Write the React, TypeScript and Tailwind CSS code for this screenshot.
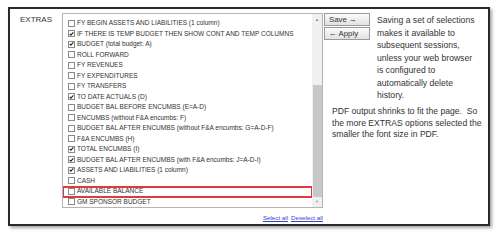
import React from "react";

const items: [string, boolean][] = [
  ["FY BEGIN ASSETS AND LIABILITIES (1 column)", false],
  ["IF THERE IS TEMP BUDGET THEN SHOW CONT AND TEMP COLUMNS", true],
  ["BUDGET (total budget: A)", true],
  ["ROLL FORWARD", false],
  ["FY REVENUES", false],
  ["FY EXPENDITURES", false],
  ["FY TRANSFERS", false],
  ["TO DATE ACTUALS (D)", true],
  ["BUDGET BAL BEFORE ENCUMBS (E=A-D)", false],
  ["ENCUMBS (without F&A encumbs: F)", false],
  ["BUDGET BAL AFTER ENCUMBS (without F&A encumbs: G=A-D-F)", false],
  ["F&A ENCUMBS (H)", false],
  ["TOTAL ENCUMBS (I)", true],
  ["BUDGET BAL AFTER ENCUMBS (with F&A encumbs: J=A-D-I)", true],
  ["ASSETS AND LIABILITIES (1 column)", true],
  ["CASH", false],
  ["AVAILABLE BALANCE", false],
  ["GM SPONSOR BUDGET", false],
];

function Box({ checked }: { checked: boolean }) {
  return (
    <span className="w-[7px] h-[7px] border border-[#8a8a8a] bg-white flex items-center justify-center shrink-0">
      {checked && (
        <svg width="6" height="6" viewBox="0 0 6 6">
          <path d="M0.8 2.8 L2.3 4.4 L5.2 1" stroke="#222" strokeWidth="1.3" fill="none" />
        </svg>
      )}
    </span>
  );
}

export default function App() {
  return (
    <div className="w-[500px] h-[240px] bg-white pt-[7px] pl-[8px]" style={{ fontFamily: '"Liberation Sans", Arial, sans-serif' }}>
      <div className="w-[482px] h-[219px] border-2 border-[#2a2a2a] shadow-[2px_2px_3px_rgba(0,0,0,0.35)] flex text-[#333]">
        <div className="w-[52px] pl-[10px] pt-[6px] text-[8px] leading-[10px]">EXTRAS</div>
        <div className="flex flex-col w-[261px] pt-[4px]">
          <div className="h-[195px] border border-[#b5b5b5] flex bg-white">
            <div className="flex-1 overflow-hidden pt-[4px] pl-[5px] relative">
              {items.map(([label, checked], i) => (
                <div key={i} className={`h-[10.5px] flex items-center gap-[2px] text-[6.5px] whitespace-nowrap text-[#333] ${label === "AVAILABLE BALANCE" ? "relative" : ""}`}>
                  <Box checked={checked} />
                  <span>{label}</span>
                  {label === "AVAILABLE BALANCE" && (
                    <span className="absolute left-[-6px] right-[-1px] top-[-0.5px] bottom-[-1px] border-2 border-[#e0393e]" />
                  )}
                </div>
              ))}
            </div>
            <div className="w-[10px] bg-[#f0f0f0] flex flex-col items-center">
              <div className="h-[11px] flex items-center justify-center text-[4px] text-[#777]">▲</div>
              <div className="h-[60px]" />
              <div className="w-[9px] h-[112px] bg-[#c8c8c8]" />
              <div className="flex-1 flex items-center justify-center text-[4px] text-[#999]">▼</div>
            </div>
          </div>
          <div className="flex justify-end gap-[3px] pt-[5px] pr-[0px] text-[6.2px] text-[#3344cc] underline">
            <span>Select all</span>
            <span>Deselect all</span>
          </div>
        </div>
        <div className="flex flex-col pt-[4px] pl-[1px]">
          <div className="flex">
            <div className="flex flex-col w-[46px]">
              <button className="h-[13px] border border-[#9a9a9a] bg-gradient-to-b from-[#fbfbfb] to-[#e2e2e2] text-[7.8px] text-left pl-[4px] leading-[11px] text-[#333]">Save →</button>
              <button className="h-[13px] border border-[#9a9a9a] bg-gradient-to-b from-[#fbfbfb] to-[#e2e2e2] text-[7.8px] text-left pl-[4px] leading-[11px] text-[#333] mt-[1px]">← Apply</button>
            </div>
            <div className="pl-[7px] pt-[1px] w-[107px] text-[8.6px] leading-[12.5px]">
              Saving a set of selections makes it available to subsequent sessions, unless your web browser is configured to automatically delete history.
            </div>
          </div>
          <div className="pl-[8px] pt-[4.5px] w-[162px] text-[8.6px] leading-[11.5px]">
            PDF output shrinks to fit the page.&nbsp; So the more EXTRAS options selected the smaller the font size in PDF.
          </div>
        </div>
      </div>
    </div>
  );
}
